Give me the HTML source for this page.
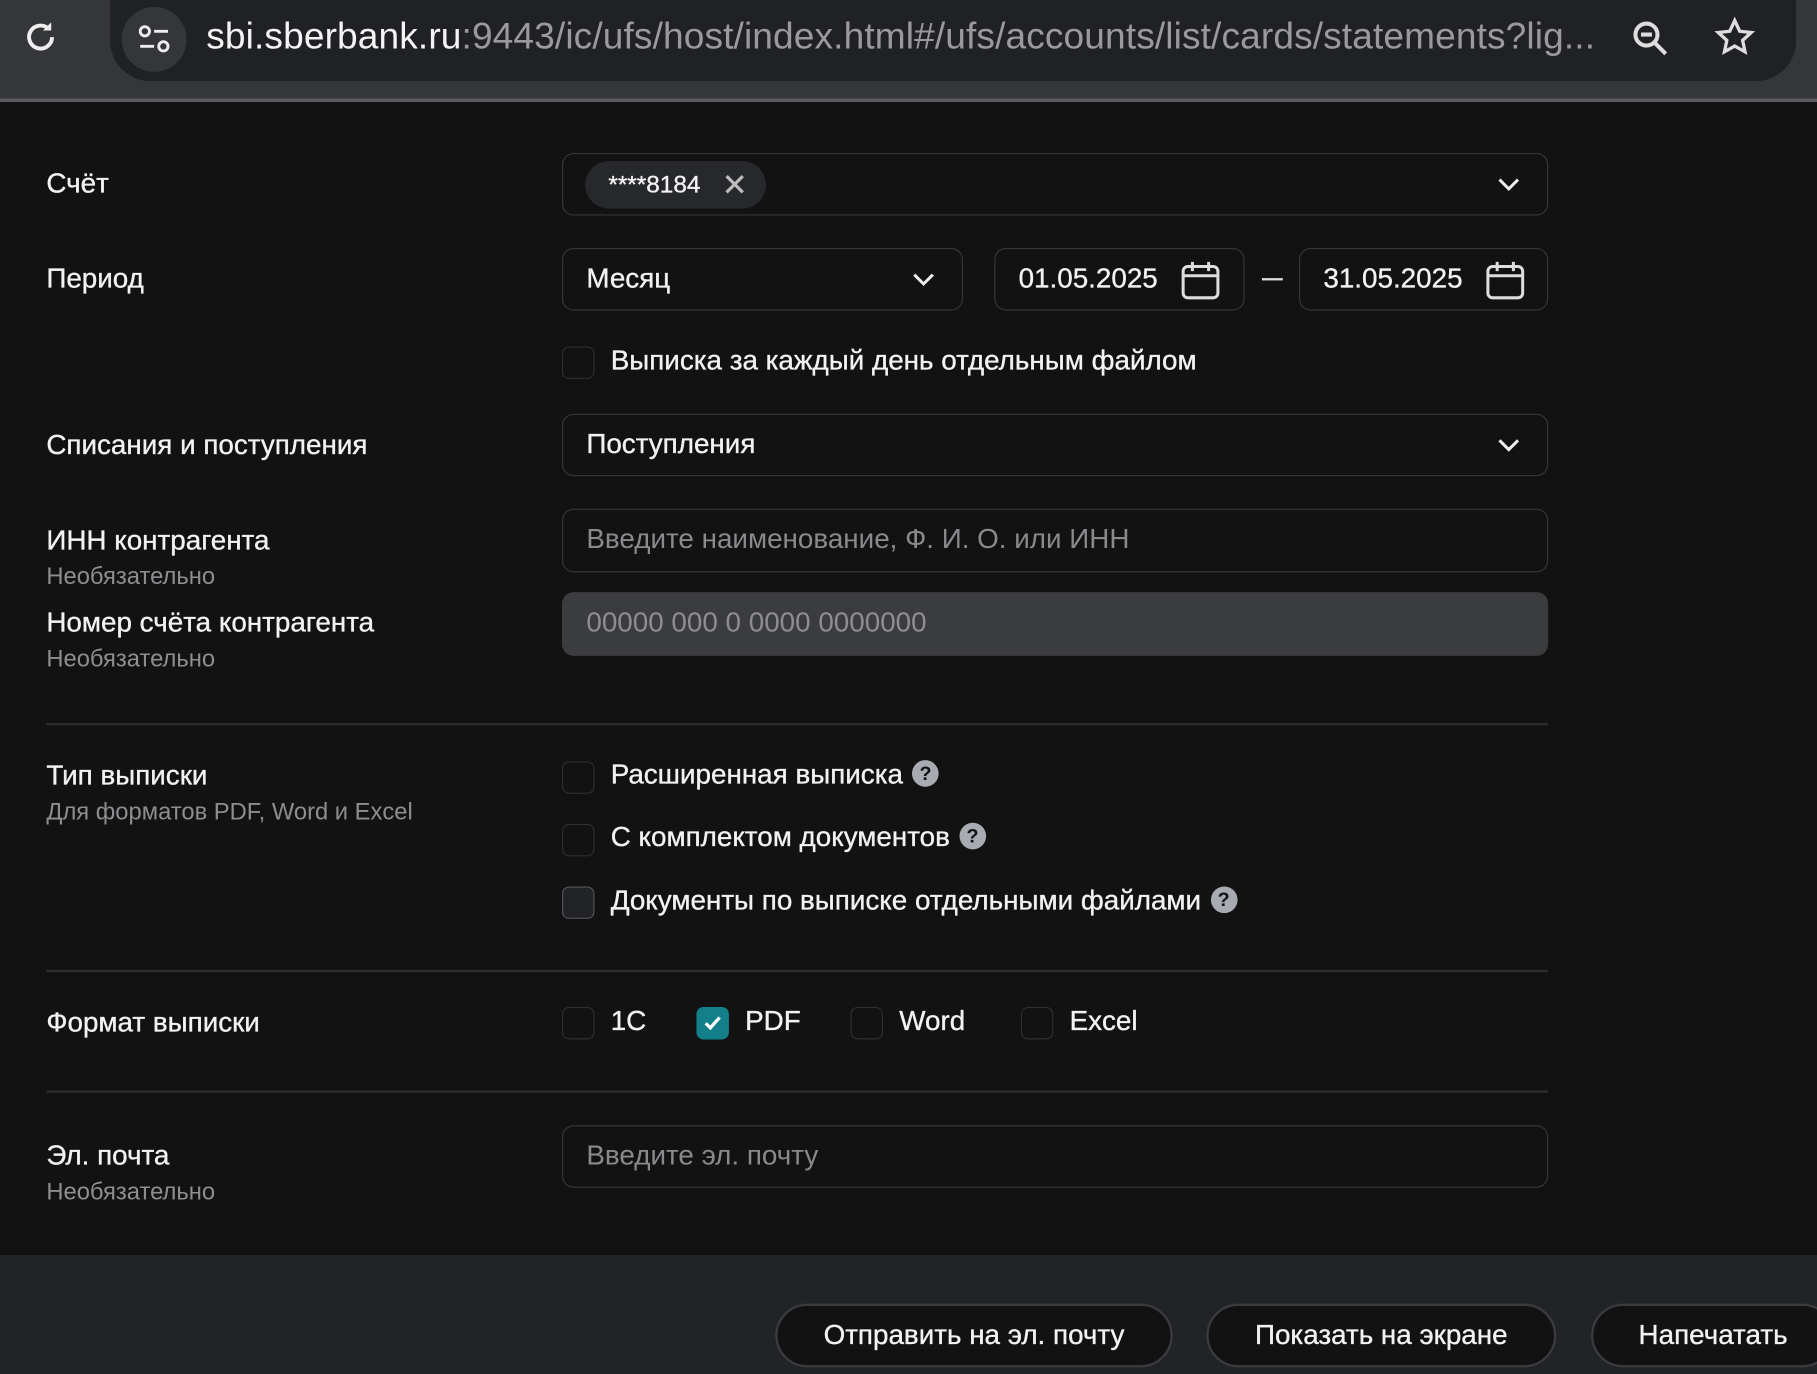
<!DOCTYPE html>
<html><head><meta charset="utf-8"><style>
html,body{margin:0;padding:0;background:#121212;overflow:hidden}
body{width:1817px;height:1374px}
#w{position:absolute;left:0;top:0;width:1568px;height:1186px;transform:scale(1.15880);transform-origin:0 0;font-family:"Liberation Sans","DejaVu Sans",sans-serif;color:#f2f2f2}
.a{position:absolute}
.top{left:0;top:0;width:1568px;height:86px;background:#35363a}
.line{left:0;top:85px;width:1568px;height:3px;background:#5b5c60}
.pill{left:95px;top:0;width:1455px;height:70px;background:#202124;border-radius:0 0 35px 35px}
.lbl{font-size:24px;color:#f2f2f2;white-space:nowrap;-webkit-text-stroke:0.3px #f2f2f2}
.sub{font-size:20.5px;color:#8e8e92}
.inp{border:1px solid #36373a;border-radius:10px;height:52px;box-sizing:border-box;font-size:24px;line-height:52px;padding-left:20px}
.ph{color:#8a8a8e}
.cb{width:28px;height:28px;border:1.5px solid #2e2f33;border-radius:6px;box-sizing:border-box}
.hr{left:40px;width:1296px;height:2px;background:#2c2d30}
.q{display:inline-block;vertical-align:3px;margin-left:8px;width:23px;height:23px;border-radius:50%;background:#a8abb2;color:#121212;font-size:17px;font-weight:bold;text-align:center;line-height:23px;-webkit-text-stroke:0}
.btn{border:2px solid #3a3b3f;background:#121212;border-radius:28px;height:55px;box-sizing:border-box;font-size:24px;text-align:center;line-height:51px}
</style></head><body><div id="w">
<div class="a top"></div><div class="a line"></div>
<div class="a pill"></div>
<svg class="a" style="left:18px;top:15px" width="34" height="34" viewBox="0 0 24 24"><path d="M19 12a7 7 0 1 1-2.1-5" fill="none" stroke="#eee" stroke-width="2.4"/><path d="M18.5 3v5h-5z" fill="#eee"/></svg>
<div class="a" style="left:105px;top:6px;width:56px;height:56px;border-radius:50%;background:#35363a"></div>
<svg class="a" style="left:117px;top:18px" width="32" height="32" viewBox="0 0 32 32" fill="none" stroke="#eee" stroke-width="2.5"><circle cx="8" cy="9" r="4"/><path d="M16 9h12M4 22h12"/><circle cx="24" cy="22" r="4"/></svg>
<div class="a" style="left:178px;top:13px;font-size:32px;white-space:nowrap;letter-spacing:0.1px"><span style="color:#f4f4f4">sbi.sberbank.ru</span><span style="color:#9a9a9e">:9443/ic/ufs/host/index.html#/ufs/accounts/list/cards/statements?lig...</span></div>
<svg class="a" style="left:1405px;top:14px" width="38" height="38" viewBox="0 0 24 24" fill="none" stroke="#ddd" stroke-width="2.2"><circle cx="10" cy="10" r="6"/><path d="M14.5 14.5l6 6M7 10h6"/></svg>
<svg class="a" style="left:1478px;top:13px" width="38" height="38" viewBox="0 0 24 24" fill="none" stroke="#ddd" stroke-width="1.8"><path d="M12 3l2.7 5.8 6.3.7-4.7 4.3 1.3 6.2L12 16.9 6.4 20l1.3-6.2L3 9.5l6.3-.7z"/></svg>

<div class="a lbl" style="left:40px;top:145px">Счёт</div>
<div class="a inp" style="left:485px;top:132px;width:851px;height:54px"></div>
<div class="a" style="left:505px;top:139px;width:156px;height:41px;border-radius:21px;background:#27282b;font-size:21px;line-height:41px;padding-left:20px;box-sizing:border-box;-webkit-text-stroke:0.3px #f2f2f2">****8184</div>
<svg class="a" style="left:624px;top:149px" width="20" height="20" viewBox="0 0 20 20" stroke="#bbb" stroke-width="2.8"><path d="M3 3l14 14M17 3L3 17"/></svg>
<svg class="a chev" style="left:1291px;top:150px" width="22" height="18" viewBox="0 0 22 18" fill="none" stroke="#eee" stroke-width="2.6"><path d="M3 5l8 8 8-8"/></svg>

<div class="a lbl" style="left:40px;top:227px">Период</div>
<div class="a inp lbl" style="left:485px;top:214px;width:346px;height:54px">Месяц</div>
<svg class="a" style="left:786px;top:232px" width="22" height="18" viewBox="0 0 22 18" fill="none" stroke="#eee" stroke-width="2.6"><path d="M3 5l8 8 8-8"/></svg>
<div class="a inp lbl" style="left:858px;top:214px;width:216px;height:54px">01.05.2025</div>
<svg class="a" style="left:1018px;top:224px" width="36" height="36" viewBox="0 0 36 36" fill="none" stroke="#ddd" stroke-width="2.6"><rect x="3" y="6" width="30" height="27" rx="4"/><path d="M3 14h30M11 2v8M25 2v8"/></svg>
<div class="a" style="left:1089px;top:240px;width:18px;height:2px;background:#ddd"></div>
<div class="a inp lbl" style="left:1121px;top:214px;width:215px;height:54px">31.05.2025</div>
<svg class="a" style="left:1281px;top:224px" width="36" height="36" viewBox="0 0 36 36" fill="none" stroke="#ddd" stroke-width="2.6"><rect x="3" y="6" width="30" height="27" rx="4"/><path d="M3 14h30M11 2v8M25 2v8"/></svg>

<div class="a cb" style="left:485px;top:299px"></div>
<div class="a lbl" style="left:527px;top:298px">Выписка за каждый день отдельным файлом</div>

<div class="a lbl" style="left:40px;top:371px">Списания и поступления</div>
<div class="a inp lbl" style="left:485px;top:357px;width:851px;height:54px">Поступления</div>
<svg class="a" style="left:1291px;top:375px" width="22" height="18" viewBox="0 0 22 18" fill="none" stroke="#eee" stroke-width="2.6"><path d="M3 5l8 8 8-8"/></svg>

<div class="a lbl" style="left:40px;top:453px">ИНН контрагента</div>
<div class="a sub" style="left:40px;top:486px">Необязательно</div>
<div class="a inp ph" style="left:485px;top:439px;width:851px;height:55px">Введите наименование, Ф. И. О. или ИНН</div>

<div class="a lbl" style="left:40px;top:524px">Номер счёта контрагента</div>
<div class="a sub" style="left:40px;top:557px">Необязательно</div>
<div class="a inp ph" style="left:485px;top:511px;width:851px;height:55px;background:#3b3c3e;border-color:#3b3c3e;color:#8e8e92">00000 000 0 0000 0000000</div>

<div class="a hr" style="top:624px"></div>

<div class="a lbl" style="left:40px;top:656px">Тип выписки</div>
<div class="a sub" style="left:40px;top:689px">Для форматов PDF, Word и Excel</div>
<div class="a cb" style="left:485px;top:657px"></div>
<div class="a lbl" style="left:527px;top:655px">Расширенная выписка<span class="q">?</span></div>
<div class="a cb" style="left:485px;top:711px"></div>
<div class="a lbl" style="left:527px;top:709px">С комплектом документов<span class="q">?</span></div>
<div class="a cb" style="left:485px;top:765px;background:#222326;border-color:#55565a"></div>
<div class="a lbl" style="left:527px;top:764px">Документы по выписке отдельными файлами<span class="q">?</span></div>

<div class="a hr" style="top:837px"></div>

<div class="a lbl" style="left:40px;top:869px">Формат выписки</div>
<div class="a cb" style="left:485px;top:869px"></div>
<div class="a lbl" style="left:527px;top:868px">1C</div>
<div class="a cb" style="left:601px;top:869px;background:#138089;border-color:#138089"></div>
<svg class="a" style="left:605px;top:873px" width="20" height="20" viewBox="0 0 20 20" fill="none" stroke="#fff" stroke-width="2.8"><path d="M4 10l4 4 8-9"/></svg>
<div class="a lbl" style="left:643px;top:868px">PDF</div>
<div class="a cb" style="left:734px;top:869px"></div>
<div class="a lbl" style="left:776px;top:868px">Word</div>
<div class="a cb" style="left:881px;top:869px"></div>
<div class="a lbl" style="left:923px;top:868px">Excel</div>

<div class="a hr" style="top:941px"></div>

<div class="a lbl" style="left:40px;top:984px">Эл. почта</div>
<div class="a sub" style="left:40px;top:1017px">Необязательно</div>
<div class="a inp ph" style="left:485px;top:971px;width:851px;height:54px">Введите эл. почту</div>

<div class="a" style="left:0;top:1083px;width:1568px;height:103px;background:#222326"></div>
<div class="a btn lbl" style="left:669px;top:1125px;width:343px">Отправить на эл. почту</div>
<div class="a btn lbl" style="left:1041px;top:1125px;width:302px">Показать на экране</div>
<div class="a btn lbl" style="left:1373px;top:1125px;width:210px;text-align:left;padding-left:39px">Напечатать</div>
</div></body></html>
